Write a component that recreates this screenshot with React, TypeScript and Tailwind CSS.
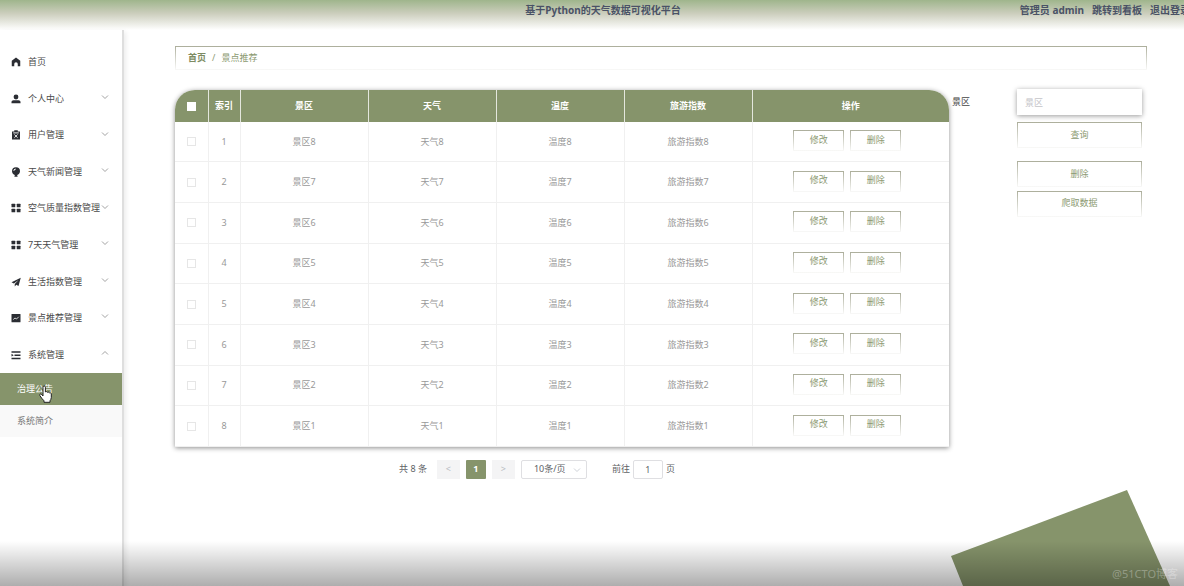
import React, { useState } from 'react';

interface IconProps {
    className?: string;
}

const HomeIcon: React.FC<IconProps> = ({ className }) => (
    <svg viewBox="0 0 20 20" className={className} fill="currentColor" aria-hidden="true">
        <path d="M10 1.200 1.500 7.500v10a1 1 0 0 0 1 1h4v-4.300a3.500 3.500 0 0 1 7 0v4.300h4a1 1 0 0 0 1-1v-10z" />
    </svg>
);

const UserIcon: React.FC<IconProps> = ({ className }) => (
    <svg viewBox="0 0 20 20" className={className} fill="currentColor" aria-hidden="true">
        <circle cx="10" cy="6" r="4.800" />
        <path d="M1 18.500v-2.500c0-2 1.800-3.500 4-3.500h10c2.200 0 4 1.500 4 3.500v2.500z" />
    </svg>
);

const ReleaseIcon: React.FC<IconProps> = ({ className }) => (
    <svg viewBox="0 0 20 20" className={className} aria-hidden="true">
        <path fill="currentColor" d="M6.500 0.500h7v2.500H18V19H2V3h4.500z" />
        <path fill="none" stroke="#fff" strokeWidth="1.800" d="M4.500 5.800h11M6.800 9l6.400 6.400M13.200 9l-6.400 6.400" />
    </svg>
);

const BalloonIcon: React.FC<IconProps> = ({ className }) => (
    <svg viewBox="0 0 20 20" className={className} fill="currentColor" aria-hidden="true">
        <path fillRule="evenodd" d="M10 0.500a8 8 0 0 1 8 8c0 3.700-2.900 6.500-5.700 7.500l1 3.500H6.700l1-3.500C4.900 15 2 12.200 2 8.500a8 8 0 0 1 8-8zM4.800 8h1.600a3.400 3.400 0 0 1 3.100-3.100V3.200A4.900 4.900 0 0 0 4.800 8z" />
    </svg>
);

const GridIcon: React.FC<IconProps> = ({ className }) => (
    <svg viewBox="0 0 20 20" className={className} fill="currentColor" aria-hidden="true">
        <rect x="1" y="1.500" width="7.500" height="7" rx="1" />
        <rect x="11.500" y="1.500" width="7.500" height="7" rx="1" />
        <rect x="1" y="11.500" width="7.500" height="7" rx="1" />
        <rect x="11.500" y="11.500" width="7.500" height="7" rx="1" />
    </svg>
);

const PlaneIcon: React.FC<IconProps> = ({ className }) => (
    <svg viewBox="0 0 20 20" className={className} fill="currentColor" aria-hidden="true">
        <path d="M19.500 1.500 1 10.500l4.800 2.300L15 6l-7.500 8v5l3-3.500 4.500 2.300z" />
    </svg>
);

const TrendIcon: React.FC<IconProps> = ({ className }) => (
    <svg viewBox="0 0 20 20" className={className} aria-hidden="true">
        <rect x="1" y="2" width="18" height="16.500" rx="1" fill="currentColor" />
        <path d="m4.500 13 3.500-3 3 2 4.500-4.500" fill="none" stroke="#fff" strokeWidth="1.600" />
    </svg>
);

const FoldIcon: React.FC<IconProps> = ({ className }) => (
    <svg viewBox="0 0 20 20" className={className} fill="currentColor" aria-hidden="true">
        <path d="M1 2.500h18v2.800H1zM7 9h12v2.800H7zM1 15.500h18v2.800H1zM1 7.600l4.500 2.800L1 13.200z" />
    </svg>
);

const ChevronIcon: React.FC<IconProps> = ({ className }) => (
    <svg viewBox="0 0 8 8" className={className} fill="none" stroke="currentColor" strokeWidth="0.8" aria-hidden="true">
        <path d="m1 2.500 3 3 3-3" />
    </svg>
);

const HandPointer: React.FC<IconProps> = ({ className }) => (
    <svg viewBox="0 0 13 18" className={className} fill="#fff" stroke="#222" strokeWidth="1" strokeLinejoin="round" aria-hidden="true">
        <path d="M4 11V2.200a1.200 1.200 0 0 1 2.400 0V7c.3-.7 1.800-.6 2 .4.500-.7 1.800-.4 2 .6.700-.5 1.900-.1 1.900 1v3.500c0 1.500-.8 2.500-1.300 3.300v1.500H5v-1.500C3.500 14.300 2 12.500.8 10.500c-.6-1.200.7-1.900 1.500-1.200z" />
    </svg>
);

const menu = [
    { label: '首页', Icon: HomeIcon, expandable: false },
    { label: '个人中心', Icon: UserIcon, expandable: true },
    { label: '用户管理', Icon: ReleaseIcon, expandable: true },
    { label: '天气新闻管理', Icon: BalloonIcon, expandable: true },
    { label: '空气质量指数管理', Icon: GridIcon, expandable: true },
    { label: '7天天气管理', Icon: GridIcon, expandable: true },
    { label: '生活指数管理', Icon: PlaneIcon, expandable: true },
    { label: '景点推荐管理', Icon: TrendIcon, expandable: true },
    { label: '系统管理', Icon: FoldIcon, expandable: true, open: true },
];

const rows = [8, 7, 6, 5, 4, 3, 2, 1];

const fadeBorder = 'border [border-image:linear-gradient(to_bottom,#acae9b,#f9f9f8)_1]';

const Header: React.FC = () => (
    <header className="grid h-[30px] grid-cols-[1fr_auto_1fr] overflow-hidden bg-linear-to-b from-[#9fb58c] via-[#cccebd] via-45% to-white pl-[22px] text-[10px] leading-5 font-bold whitespace-nowrap text-[#4a5266]">
        <h1 className="col-start-2">基于Python的天气数据可视化平台</h1>
        <nav className="-mr-1.5 flex gap-2 justify-self-end">
            <span>管理员 admin</span>
            <a href="#board">跳转到看板</a>
            <a href="#logout">退出登录</a>
        </nav>
    </header>
);

const Sidebar: React.FC = () => (
    <aside className="w-[124px] shrink-0 border-r-2 border-[#dedede] bg-white pt-[14px] shadow-[2px_2px_5px_rgba(0,0,0,0.08)]">
        <ul className="grid h-[329px] auto-rows-fr">
            {menu.map(({ label, Icon, expandable, open }) => (
                <li key={label}>
                    <button className="relative flex h-full w-full items-center gap-[7px] pl-[11px] whitespace-nowrap text-[#4a4a4a]">
                        <Icon className="h-2.5 w-2.5 shrink-0 text-[#2b2d33]" />
                        <span>{label}</span>
                        {expandable && (
                            <ChevronIcon className={`absolute right-[13px] bottom-4 h-2 w-2 text-[#8a8a8a] ${open ? 'rotate-180' : ''}`} />
                        )}
                    </button>
                </li>
            ))}
        </ul>
        <ul>
            <li className="relative">
                <a href="#notice" className="block bg-[#86946b] pl-[17px] leading-8 text-white">治理公告</a>
                <HandPointer className="pointer-events-none absolute top-3 left-[39px] h-[18px] w-[13px]" />
            </li>
            <li>
                <a href="#about" className="block bg-[#f9f9f9] pl-[17px] leading-8 text-[#777]">系统简介</a>
            </li>
        </ul>
    </aside>
);

const DataTable: React.FC = () => {
    const [selected, setSelected] = useState<number[]>([]);

    const toggle = (n: number) =>
        setSelected(selected.includes(n) ? selected.filter((s) => s !== n) : [...selected, n]);

    return (
        <div className="min-w-0 flex-1 overflow-hidden rounded-t-[20px] shadow-[0_1px_5px_rgba(0,0,0,0.45)]">
            <table className="h-[357px] w-full table-fixed border-collapse bg-white text-center text-[#999]">
                <colgroup>
                    <col className="w-[33px]" />
                    <col className="w-[32px]" />
                    <col />
                    <col />
                    <col />
                    <col />
                    <col className="w-[197px]" />
                </colgroup>
                <thead>
                    <tr className="h-8 bg-[#86946b] text-white *:border-r *:border-[#e4e7dd] *:last:border-r-0">
                        <th>
                            <input
                                type="checkbox"
                                aria-label="全选"
                                checked={selected.length === rows.length}
                                onChange={(e) => setSelected(e.target.checked ? rows : [])}
                                className="mx-auto block h-[9px] w-[9px] appearance-none bg-white checked:bg-[#5f6b48]"
                            />
                        </th>
                        <th>索引</th>
                        <th>景区</th>
                        <th>天气</th>
                        <th>温度</th>
                        <th>旅游指数</th>
                        <th>操作</th>
                    </tr>
                </thead>
                <tbody>
                    {rows.map((n, i) => (
                        <tr key={n} className="*:border-r *:border-b *:border-[#f0f0f0] *:last:border-r-0">
                            <td>
                                <input
                                    type="checkbox"
                                    aria-label={`景区${n}`}
                                    checked={selected.includes(n)}
                                    onChange={() => toggle(n)}
                                    className="mx-auto block h-[9px] w-[9px] appearance-none border border-[#e6e6e6] bg-white checked:bg-[#86946b]"
                                />
                            </td>
                            <td>{i + 1}</td>
                            <td>景区{n}</td>
                            <td>天气{n}</td>
                            <td>温度{n}</td>
                            <td>旅游指数{n}</td>
                            <td>
                                <div className="flex justify-center gap-1.5 pr-[7px] pb-0.5 text-[#8c9a72]">
                                    <button className={`h-[21px] w-[51px] pb-0.5 ${fadeBorder}`}>修改</button>
                                    <button className={`h-[21px] w-[51px] pb-0.5 ${fadeBorder}`}>删除</button>
                                </div>
                            </td>
                        </tr>
                    ))}
                </tbody>
            </table>
        </div>
    );
};

const SearchPanel: React.FC = () => (
    <form className="flex w-[198px] shrink-0 justify-between pr-[5px] pl-[3px]" onSubmit={(e) => e.preventDefault()}>
        <label htmlFor="spot" className="h-6 leading-6 text-[#444]">景区</label>
        <div className="flex w-[125px] flex-col text-[#8c9a72]">
            <input
                id="spot"
                placeholder="景区"
                className="-mt-px h-[26px] bg-white px-2 text-[#444] shadow-[0_1px_5px_rgba(0,0,0,0.4)] outline-none placeholder:text-[#c4c4c8]"
            />
            <button type="submit" className={`mt-[7px] h-[26px] ${fadeBorder}`}>查询</button>
            <button type="button" className={`mt-[13px] h-[26px] ${fadeBorder}`}>删除</button>
            <button type="button" className={`mt-1 h-[26px] pb-0.5 ${fadeBorder}`}>爬取数据</button>
        </div>
    </form>
);

const Pagination: React.FC = () => {
    const [page, setPage] = useState('1');

    return (
        <div className="mt-3 mr-[198px] flex h-5 items-center justify-center pr-[50px] text-[#606266]">
            <span className="mr-2.5">共 8 条</span>
            <button className="h-[19px] w-[23px] bg-[#f4f4f5] text-[#b8bbc2]" aria-label="上一页">&lt;</button>
            <button className="mx-1.5 h-[19px] w-5 rounded-[1px] bg-[#86946b] font-bold text-white">1</button>
            <button className="h-[19px] w-[23px] bg-[#f4f4f5] text-[#b8bbc2]" aria-label="下一页">&gt;</button>
            <div className="relative mr-[25px] ml-1.5">
                <select aria-label="每页条数" className="h-[19px] w-[66px] appearance-none rounded-xs border border-[#dfdfe2] bg-white pl-3">
                    <option>10条/页</option>
                    <option>20条/页</option>
                    <option>50条/页</option>
                </select>
                <ChevronIcon className="pointer-events-none absolute top-1.5 right-1.5 h-2 w-2 text-[#c0c4cc]" />
            </div>
            <label htmlFor="page">前往</label>
            <input
                id="page"
                value={page}
                onChange={(e) => setPage(e.target.value)}
                className="mx-[3px] h-[19px] w-[30px] rounded-xs border border-[#dfdfe2] bg-white text-center"
            />
            <span>页</span>
        </div>
    );
};

const App: React.FC = () => (
    <div className="relative flex min-h-screen flex-col overflow-hidden bg-white font-['Noto_Sans','Noto_Sans_CJK_SC',sans-serif] text-[9px] leading-3">
        <Header />
        <div className="flex flex-1">
            <Sidebar />
            <main className="min-w-0 flex-1 pt-4 pr-[37px] pl-[51px]">
                <nav className={`mb-5 flex h-6 items-center gap-1.5 px-3 text-[#8c9a72] ${fadeBorder}`}>
                    <a href="#home" className="font-bold text-[#7d8b62]">首页</a>
                    <span>/</span>
                    <span>景点推荐</span>
                </nav>
                <div className="flex items-start">
                    <DataTable />
                    <SearchPanel />
                </div>
                <Pagination />
            </main>
        </div>
        <svg viewBox="0 0 233 96" className="pointer-events-none absolute right-0 bottom-0 h-24 w-[233px]" aria-hidden="true">
            <path d="M0 66 176 0l43 96H12z" fill="#86946b" />
        </svg>
        <div className="pointer-events-none absolute inset-x-0 bottom-0 h-[45px] bg-linear-to-b from-transparent to-black/32" />
        <span className="absolute right-1.5 bottom-1.5 text-[11px] leading-3 text-white/30">@51CTO博客</span>
    </div>
);

export default App;
